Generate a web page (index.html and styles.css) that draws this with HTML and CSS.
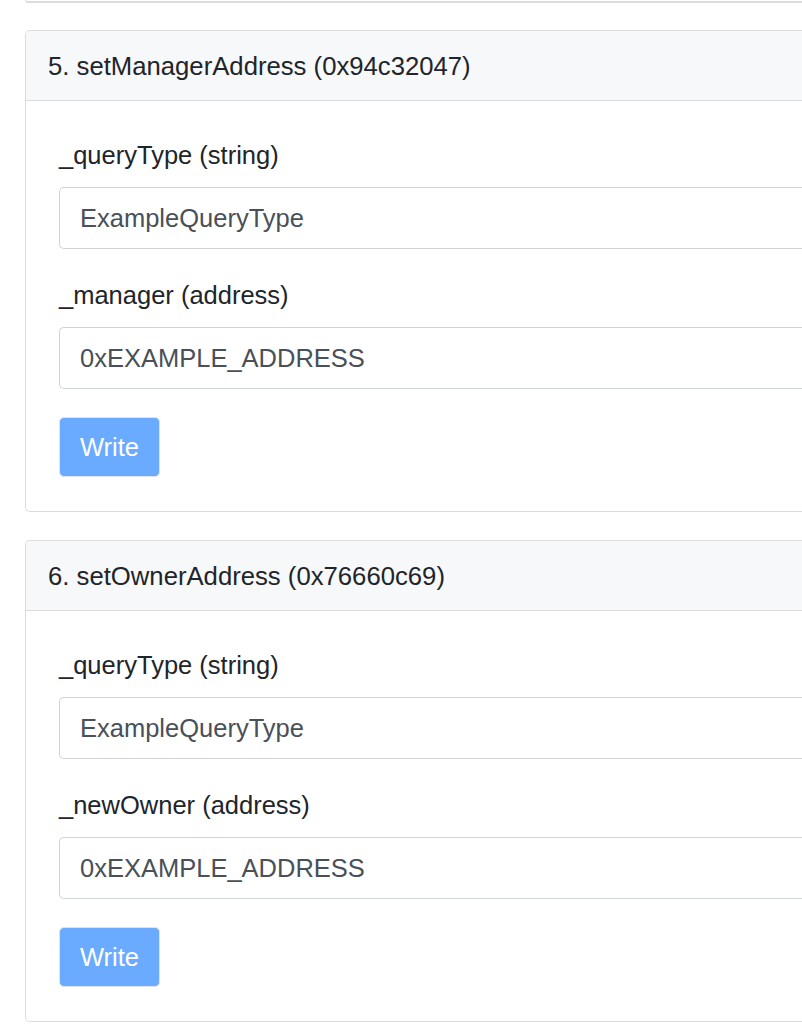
FILE: index.html
```html
<!DOCTYPE html>
<html lang="en">
<head>
<meta charset="utf-8">
<title>Write Contract</title>
<link rel="stylesheet" href="styles.css">
</head>
<body>
<div class="page">
  <div class="card-end"></div>

  <section class="card">
    <div class="card-header">5. setManagerAddress (0x94c32047)</div>
    <div class="card-body">
      <div class="field">
        <label class="label">_queryType (string)</label>
        <input class="input" type="text" value="ExampleQueryType">
      </div>
      <div class="field">
        <label class="label">_manager (address)</label>
        <input class="input" type="text" value="0xEXAMPLE_ADDRESS">
      </div>
      <button class="btn" type="button" disabled>Write</button>
    </div>
  </section>

  <section class="card">
    <div class="card-header">6. setOwnerAddress (0x76660c69)</div>
    <div class="card-body">
      <div class="field">
        <label class="label">_queryType (string)</label>
        <input class="input" type="text" value="ExampleQueryType">
      </div>
      <div class="field">
        <label class="label">_newOwner (address)</label>
        <input class="input" type="text" value="0xEXAMPLE_ADDRESS">
      </div>
      <button class="btn" type="button" disabled>Write</button>
    </div>
  </section>
</div>
</body>
</html>
```
FILE: styles.css
```css
html, body {
  margin: 0;
  padding: 0;
  background: #ffffff;
  overflow: hidden;
}

body {
  font-family: "Liberation Sans", Arial, Helvetica, sans-serif;
  color: #212529;
  font-size: 25.5px;
  line-height: 36px;
}

.page {
  box-sizing: border-box;
  width: 802px;
  padding-left: 25px;
}

.card-end {
  height: 1px;
  border: 1px solid #dcdcdc;
  border-bottom-width: 2px;
  border-top: 0;
  border-right: 0;
  border-radius: 0 0 0 5px;
  margin-bottom: 27px;
}

.card {
  border: 1px solid #dcdcdc;
  border-right: 0;
  border-radius: 5px 0 0 5px;
  margin-bottom: 28px;
  background: #ffffff;
  overflow: hidden;
}

.card-header {
  background: #f7f8fa;
  border-bottom: 1px solid #dcdcdc;
  padding: 17px 22px 16px;
  font-size: 25.7px;
  color: #212529;
  white-space: nowrap;
}

.card-body {
  padding: 36px 0 34px 33px;
}

.field {
  display: flex;
  flex-direction: column;
  margin-bottom: 28px;
}

.label {
  display: block;
  margin-bottom: 14px;
  color: #212529;
}

.input {
  box-sizing: border-box;
  width: 100%;
  height: 62px;
  border: 1px solid #ced4da;
  border-right: 0;
  border-radius: 5px 0 0 5px;
  padding: 0 20px;
  font-family: inherit;
  font-size: 25.5px;
  color: #495057;
  background: #ffffff;
  outline: none;
}

.btn {
  display: block;
  box-sizing: border-box;
  width: 101px;
  height: 60px;
  background: #6aabff;
  border: 1px solid #dde4ee;
  border-radius: 5px;
  color: #ffffff;
  font-family: inherit;
  font-size: 25.5px;
  padding: 0;
  cursor: default;
}
```
